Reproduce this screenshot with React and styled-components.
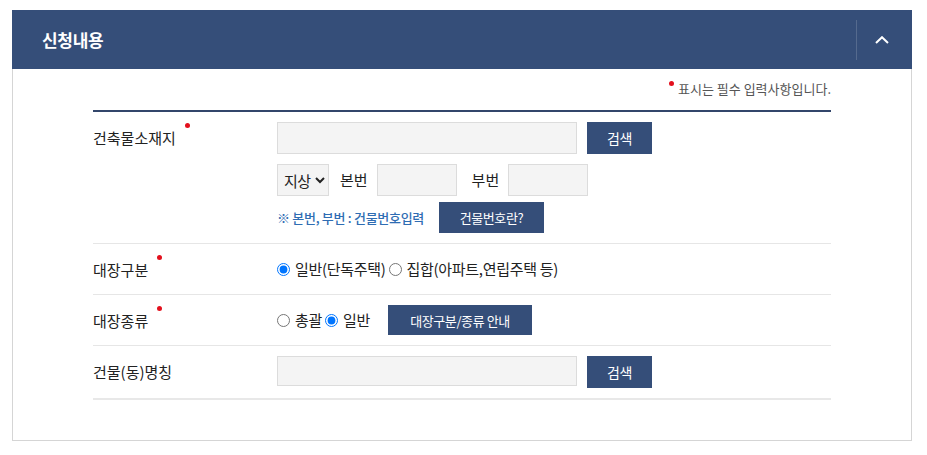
import React, { useState } from 'react';
import styled, { createGlobalStyle } from 'styled-components';

const GlobalStyle = createGlobalStyle`
  html, body {
    margin: 0;
    padding: 0;
    background: #fff;
  }
  body {
    font-family: "Noto Sans CJK KR", "Noto Sans", sans-serif;
    color: #222;
  }
`;

const Page = styled.div`
  padding: 10px 0 0 12px;
`;

const Panel = styled.section`
  width: 900px;
`;

const Header = styled.header`
  display: flex;
  align-items: center;
  justify-content: space-between;
  height: 59px;
  padding-left: 30px;
  box-sizing: border-box;
  background: #354e79;
`;

const Title = styled.h2`
  margin: 0;
  font-size: 17px;
  font-weight: 700;
  line-height: 1;
  letter-spacing: -0.3px;
  color: #fff;
`;

const Toggle = styled.button`
  display: flex;
  align-items: center;
  justify-content: center;
  width: 56px;
  height: 40px;
  padding: 0 5px 0 0;
  border: 0;
  border-left: 1px solid rgba(255, 255, 255, 0.16);
  background: transparent;
  cursor: pointer;
`;

const Body = styled.div`
  padding: 0 80px 40px;
  border: 1px solid #d5d5d5;
  border-top: 0;
`;

const Required = styled.p`
  margin: 0;
  padding: 10px 0 11px;
  text-align: right;
  font-size: 13px;
  line-height: 20px;
  letter-spacing: 0;
  color: #555;
`;

const Dot = styled.span`
  display: inline-block;
  width: 5px;
  height: 5px;
  border-radius: 50%;
  background: #e3101d;
  vertical-align: 8px;
  margin-right: 4px;
`;

const Form = styled.div`
  border-top: 2px solid #33466b;
  border-bottom: 2px solid #e8e8e8;
`;

const Row = styled.div`
  display: grid;
  grid-template-columns: 184px 1fr;
  border-bottom: 1px solid #e6e6e6;

  &:last-child {
    border-bottom: 0;
  }
`;

const LabelCell = styled.div`
  padding: 11px 0 9px;
`;

const Label = styled.span`
  display: inline-flex;
  align-items: flex-start;
  font-size: 15px;
  line-height: 30px;
  letter-spacing: 0;
  color: #222;
`;

const Mark = styled.i`
  display: block;
  width: 5px;
  height: 5px;
  margin: 0 0 0 9px;
  border-radius: 50%;
  background: #e3101d;
`;

const Cell = styled.div`
  display: flex;
  flex-direction: column;
  padding: 10px 0;
`;

const Line = styled.div`
  display: flex;
  align-items: ${p => p.$align || 'center'};
  min-height: 30px;
  margin-top: ${p => p.$gap || 0}px;
`;

const TextInput = styled.input`
  box-sizing: border-box;
  width: ${p => p.$w || 300}px;
  height: ${p => p.$h || 32}px;
  margin: 0 0 0 ${p => p.$ml || 0}px;
  padding: 0 8px;
  border: 1px solid #dcdcdc;
  background: #f4f4f4;
  font: inherit;
  font-size: 14px;
  outline: none;
`;

const Select = styled.select`
  box-sizing: border-box;
  width: 52px;
  height: 32px;
  margin: 0;
  padding: 0 0 0 2px;
  border: 1px solid #dcdcdc;
  border-radius: 0;
  background: #f4f4f4;
  font-family: "Noto Sans CJK KR", sans-serif;
  font-size: 15px;
  letter-spacing: -0.5px;
  color: #222;
`;

const Text = styled.span`
  margin-left: ${p => p.$ml || 0}px;
  font-size: 15px;
  line-height: 20px;
  letter-spacing: 0;
  color: #222;
`;

const Hint = styled.span`
  font-size: 13px;
  font-weight: 500;
  line-height: 20px;
  letter-spacing: -0.3px;
  color: #2f6db3;
`;

const Button = styled.button`
  box-sizing: border-box;
  width: ${p => p.$w}px;
  height: ${p => p.$h || 30}px;
  margin-left: ${p => p.$ml || 0}px;
  padding: 0;
  border: 0;
  background: #354e79;
  color: #fff;
  font-family: "Noto Sans CJK KR", sans-serif;
  font-size: ${p => p.$fs || 13}px;
  letter-spacing: -0.4px;
  cursor: pointer;
`;

const Radio = styled.input.attrs({ type: 'radio' })`
  width: 13px;
  height: 13px;
  margin: 0 5px 0 0;
`;

const RadioText = styled.label`
  margin-right: 3px;
  font-size: 15px;
  line-height: 20px;
  letter-spacing: -0.3px;
  color: #222;
`;

const Chevron = () => (
  <svg width="14" height="8" viewBox="0 0 14 8" aria-hidden="true">
    <polyline points="1,7 7,1.2 13,7" fill="none" stroke="#fff" strokeWidth="2" />
  </svg>
);

export default function App() {
  const [ledger, setLedger] = useState('general');
  const [kind, setKind] = useState('general');

  return (
    <Page>
      <GlobalStyle />
      <Panel>
        <Header>
          <Title>신청내용</Title>
          <Toggle aria-label="접기">
            <Chevron />
          </Toggle>
        </Header>
        <Body>
          <Required>
            <Dot />
            표시는 필수 입력사항입니다.
          </Required>
          <Form>
            <Row>
              <LabelCell>
                <Label>
                  건축물소재지
                  <Mark />
                </Label>
              </LabelCell>
              <Cell>
                <Line>
                  <TextInput />
                  <Button $w={65} $h={32} $ml={10} $fs={14}>검색</Button>
                </Line>
                <Line $gap={10}>
                  <Select defaultValue="ground">
                    <option value="ground">지상</option>
                    <option value="under">지하</option>
                  </Select>
                  <Text $ml={11}>본번</Text>
                  <TextInput $w={80} $ml={9} />
                  <Text $ml={15}>부번</Text>
                  <TextInput $w={80} $ml={9} />
                </Line>
                <Line $gap={6}>
                  <Hint>※ 본번, 부번 : 건물번호입력</Hint>
                  <Button $w={105} $h={31} $ml={15}>건물번호란?</Button>
                </Line>
              </Cell>
            </Row>
            <Row>
              <LabelCell>
                <Label>
                  대장구분
                  <Mark />
                </Label>
              </LabelCell>
              <Cell>
                <Line>
                  <Radio
                    id="ledger-general"
                    name="ledger"
                    checked={ledger === 'general'}
                    onChange={() => setLedger('general')}
                  />
                  <RadioText htmlFor="ledger-general">일반(단독주택)</RadioText>
                  <Radio
                    id="ledger-group"
                    name="ledger"
                    checked={ledger === 'group'}
                    onChange={() => setLedger('group')}
                  />
                  <RadioText htmlFor="ledger-group">집합(아파트,연립주택 등)</RadioText>
                </Line>
              </Cell>
            </Row>
            <Row>
              <LabelCell>
                <Label>
                  대장종류
                  <Mark />
                </Label>
              </LabelCell>
              <Cell>
                <Line>
                  <Radio
                    id="kind-total"
                    name="kind"
                    checked={kind === 'total'}
                    onChange={() => setKind('total')}
                  />
                  <RadioText htmlFor="kind-total">총괄</RadioText>
                  <Radio
                    id="kind-general"
                    name="kind"
                    checked={kind === 'general'}
                    onChange={() => setKind('general')}
                  />
                  <RadioText htmlFor="kind-general">일반</RadioText>
                  <Button $w={144} $ml={15}>대장구분/종류 안내</Button>
                </Line>
              </Cell>
            </Row>
            <Row>
              <LabelCell>
                <Label>건물(동)명칭</Label>
              </LabelCell>
              <Cell>
                <Line $align="flex-start">
                  <TextInput $h={30} />
                  <Button $w={65} $h={32} $ml={10} $fs={14}>검색</Button>
                </Line>
              </Cell>
            </Row>
          </Form>
        </Body>
      </Panel>
    </Page>
  );
}
